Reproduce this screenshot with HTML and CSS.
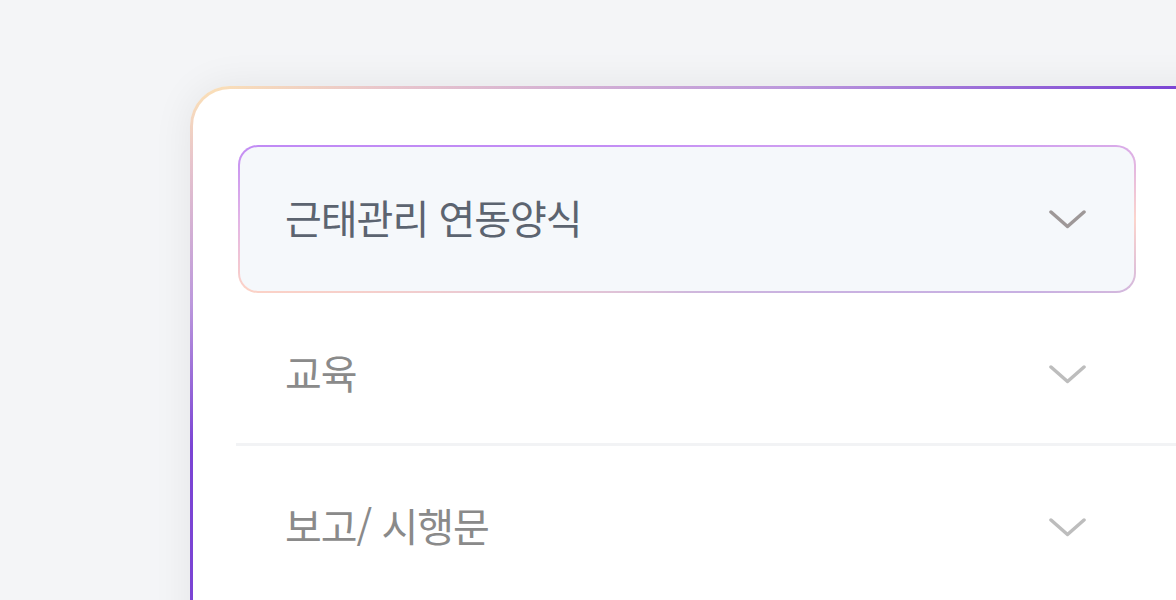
FILE: index.html
```html
<!DOCTYPE html>
<html lang="ko">
<head>
  <meta charset="UTF-8" />
  <title>양식함</title>
  <link rel="stylesheet" href="styles.css">
</head>
<body>

<!-- 양식 카드 -->
<div class="form-card">
  <ul class="menu">
    <li class="menu-item active">
      <div class="menu-head">
        <span class="menu-title">근태관리 연동양식</span>
        <svg class="chevron" width="37" height="19" viewBox="0 0 37 19">
          <polyline points="2,2 18.5,16.5 35,2" />
        </svg>
      </div>
    </li>
    <li class="menu-item">
      <div class="menu-head">
        <span class="menu-title">교육</span>
        <svg class="chevron" width="37" height="19" viewBox="0 0 37 19">
          <polyline points="2,2 18.5,16.5 35,2" />
        </svg>
      </div>
    </li>
    <li class="menu-item">
      <div class="menu-head">
        <span class="menu-title">보고/ 시행문</span>
        <svg class="chevron" width="37" height="19" viewBox="0 0 37 19">
          <polyline points="2,2 18.5,16.5 35,2" />
        </svg>
      </div>
    </li>
  </ul>
</div>

</body>
</html>
```

FILE: styles.css
```css
html, body {
  margin: 0;
  padding: 0;
  height: 100%;
  overflow: hidden;
}

body {
  font-family: 'Noto Sans CJK KR', 'Noto Sans', sans-serif;
  background-color: #f4f5f7;
}

.form-card {
  width: 1200px;
  height: 800px;
  margin: 86px 0 0 190px;
  border: 3px solid transparent;
  border-radius: 40px 0 0 0;
  background:
    linear-gradient(#fff, #fff) padding-box,
    linear-gradient(160deg, #fde3b4 0px, #e8c5cc 70px, #bc98dc 205px, #7b44d4 340px) border-box;
  box-shadow: 0 0 40px rgba(0, 0, 0, 0.07);
  padding: 56px 0 0 43px;
  box-sizing: border-box;
}

.menu {
  list-style: none;
  margin: 0;
  padding: 0;
  display: flex;
  flex-direction: column;
  gap: 12px;
}

.menu-item {
  border-bottom: 3px solid #f2f3f5;
}

.menu-item:last-child {
  border-bottom: none;
}

.menu-head {
  width: 898px;
  height: 138px;
  margin-left: 2px;
  box-sizing: border-box;
  border: 2px solid transparent;
  border-radius: 20px;
  padding: 0 48px 5px 45px;
  display: flex;
  align-items: center;
  justify-content: space-between;
}

.menu-title {
  font-size: 40px;
  font-weight: 400;
  letter-spacing: -1px;
  color: #8a8a8a;
}

.chevron {
  margin-top: 5px;
}

.chevron polyline {
  fill: none;
  stroke: #bdbdbd;
  stroke-width: 3.5;
  stroke-linecap: round;
  stroke-linejoin: round;
}

/* 선택된 항목 */
.menu-item.active {
  border-bottom: none;
}

.menu-item.active .menu-head {
  height: 148px;
  background:
    linear-gradient(#f5f8fb, #f5f8fb) padding-box,
    conic-gradient(from 0deg, #c894f4 0deg, #d0a0f0 78deg, #fcd4cc 90deg, #c8b0e2 102deg,
      #d0b8dc 180deg, #e8c8d4 250deg, #fcd2c6 261deg, #e2b4e6 270deg, #c08af5 280deg, #c894f4 360deg) border-box;
}

.menu-item.active .menu-title {
  color: #5c6470;
}

.menu-item.active .chevron polyline {
  stroke: #9e9898;
}
```
